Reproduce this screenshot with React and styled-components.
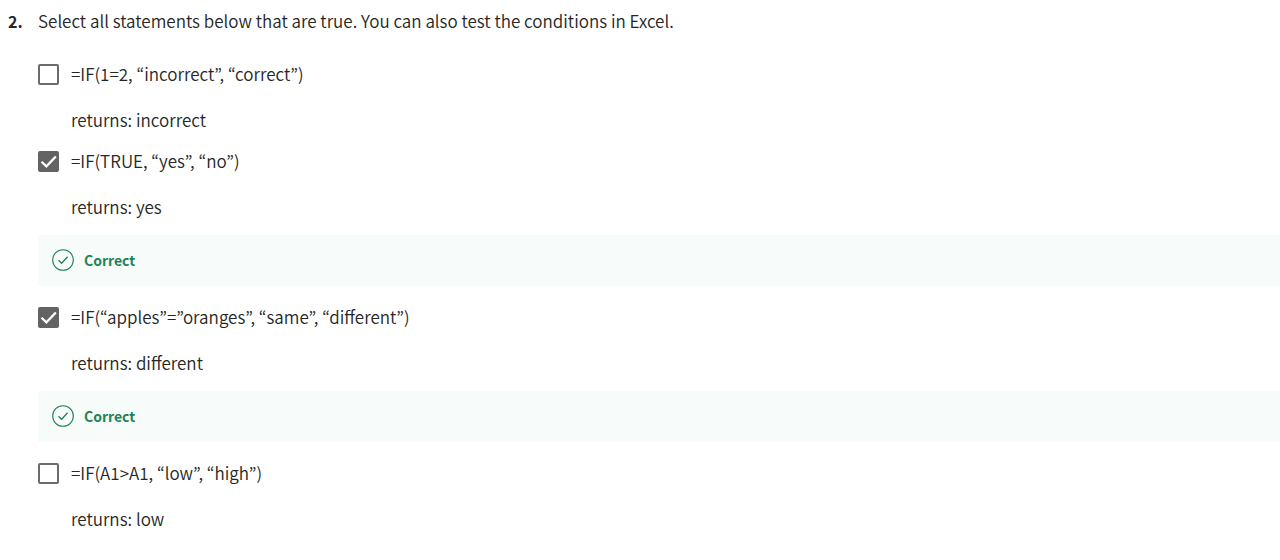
import React from "react";
import styled, { createGlobalStyle } from "styled-components";

const GlobalStyle = createGlobalStyle`
  * { box-sizing: border-box; }
  body {
    margin: 0;
    background: #fff;
    color: #262626;
    font-family: "Noto Sans CJK KR", "Noto Sans", sans-serif;
    font-size: 17px;
    font-weight: 350;
    line-height: 24px;
  }
`;

const Page = styled.main`
  padding: 9px 0 16px 8px;
`;

const Question = styled.fieldset`
  margin: 0;
  padding: 0;
  border: 0;
  min-width: 0;
`;

const Prompt = styled.legend`
  display: flex;
  padding: 0;
`;

const QuestionNumber = styled.span`
  width: 30px;
  flex: none;
  font-size: 16px;
  font-weight: 700;
`;

const Options = styled.ul`
  list-style: none;
  margin: 0;
  padding: 29px 0 0 30px;
`;

const Option = styled.li`
  margin-bottom: ${(p) => (p.$graded ? "19px" : "17px")};
`;

const OptionLabel = styled.label`
  display: flex;
  align-items: flex-start;
  gap: 12px;
  width: fit-content;
  cursor: pointer;
`;

const CheckSlot = styled.span`
  display: grid;
  flex: none;
  width: 21px;
  margin-top: 2px;

  & > * {
    grid-area: 1 / 1;
  }
`;

const Checkbox = styled.input`
  appearance: none;
  width: 21px;
  height: 21px;
  margin: 0;
  border: 2px solid #6b6b6b;
  border-radius: 2px;
  background: #fff;
  cursor: pointer;

  &:checked {
    background: #636363;
    border-color: #636363;
  }
`;

const Tick = styled.svg`
  pointer-events: none;
  visibility: hidden;

  ${Checkbox}:checked + & {
    visibility: visible;
  }
`;

const OptionText = styled.span`
  display: flex;
  flex-direction: column;
  gap: 22px;
`;

const Feedback = styled.div`
  display: flex;
  align-items: center;
  gap: 10px;
  margin-top: 16px;
  padding: 13px 14px 14px;
  background: #f7fbf9;
  color: #1f8354;
  font-size: 14px;
  font-weight: 700;
`;

const options = [
  { formula: "=IF(1=2, “incorrect”, “correct”)", result: "returns: incorrect" },
  { formula: "=IF(TRUE, “yes”, “no”)", result: "returns: yes", checked: true, feedback: "Correct" },
  {
    formula: "=IF(“apples”=”oranges”, “same”, “different”)",
    result: "returns: different",
    checked: true,
    feedback: "Correct",
  },
  { formula: "=IF(A1>A1, “low”, “high”)", result: "returns: low" },
];

function CorrectIcon() {
  return (
    <svg width="22" height="22" viewBox="0 0 22 22" fill="none" stroke="currentColor" aria-hidden="true">
      <circle cx="11" cy="11" r="10.3" strokeWidth="1.1" />
      <path d="M6.5 11.3 9.6 14.3 15.6 7.8" strokeWidth="1.3" />
    </svg>
  );
}

export default function App() {
  return (
    <>
      <GlobalStyle />
      <Page>
        <Question>
          <Prompt>
            <QuestionNumber>2.</QuestionNumber>
            <span>Select all statements below that are true. You can also test the conditions in Excel.</span>
          </Prompt>
          <Options>
            {options.map((o, i) => (
              <Option key={o.formula} $graded={Boolean(o.feedback)}>
                <OptionLabel htmlFor={`option-${i}`}>
                  <CheckSlot>
                    <Checkbox type="checkbox" id={`option-${i}`} defaultChecked={o.checked} />
                    <Tick width="21" height="21" viewBox="0 0 20 20" fill="none" stroke="#fff" strokeWidth="2.2" aria-hidden="true">
                      <path d="M3.4 10.2 8 14.6 17 5.2" />
                    </Tick>
                  </CheckSlot>
                  <OptionText>
                    <span>{o.formula}</span>
                    <span>{o.result}</span>
                  </OptionText>
                </OptionLabel>
                {o.feedback && (
                  <Feedback role="status">
                    <CorrectIcon />
                    <span>{o.feedback}</span>
                  </Feedback>
                )}
              </Option>
            ))}
          </Options>
        </Question>
      </Page>
    </>
  );
}
